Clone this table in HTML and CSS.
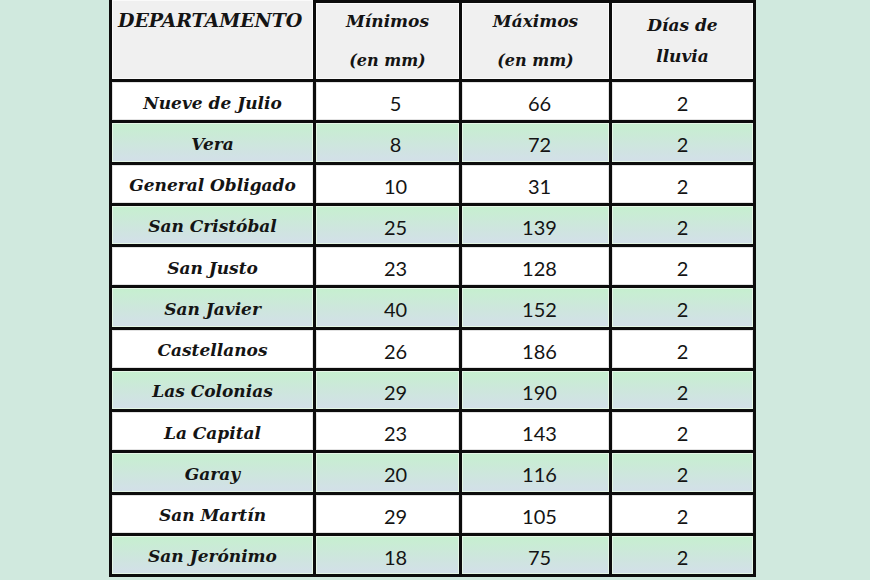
FILE: index.html
```html
<!DOCTYPE html>
<html lang="es">
<head>
<meta charset="utf-8">
<title>Lluvias por departamento</title>
<link rel="stylesheet" href="styles.css">
</head>
<body>
<div class="page">
  <div class="grid">
    <div class="cell head first"><span class="h-dep">DEPARTAMENTO</span></div>
    <div class="cell head"><span class="h-line1">Mínimos</span><span class="h-line2">(en mm)</span></div>
    <div class="cell head"><span class="h-line1">Máximos</span><span class="h-line2">(en mm)</span></div>
    <div class="cell head days"><span>Días de</span><span>lluvia</span></div>

    <div class="cell name">Nueve de Julio</div><div class="cell num c2">5</div><div class="cell num c3">66</div><div class="cell num c4">2</div>
    <div class="cell name g">Vera</div><div class="cell num c2 g">8</div><div class="cell num c3 g">72</div><div class="cell num c4 g">2</div>
    <div class="cell name">General Obligado</div><div class="cell num c2">10</div><div class="cell num c3">31</div><div class="cell num c4">2</div>
    <div class="cell name g">San Cristóbal</div><div class="cell num c2 g">25</div><div class="cell num c3 g">139</div><div class="cell num c4 g">2</div>
    <div class="cell name">San Justo</div><div class="cell num c2">23</div><div class="cell num c3">128</div><div class="cell num c4">2</div>
    <div class="cell name g">San Javier</div><div class="cell num c2 g">40</div><div class="cell num c3 g">152</div><div class="cell num c4 g">2</div>
    <div class="cell name">Castellanos</div><div class="cell num c2">26</div><div class="cell num c3">186</div><div class="cell num c4">2</div>
    <div class="cell name g">Las Colonias</div><div class="cell num c2 g">29</div><div class="cell num c3 g">190</div><div class="cell num c4 g">2</div>
    <div class="cell name">La Capital</div><div class="cell num c2">23</div><div class="cell num c3">143</div><div class="cell num c4">2</div>
    <div class="cell name g">Garay</div><div class="cell num c2 g">20</div><div class="cell num c3 g">116</div><div class="cell num c4 g">2</div>
    <div class="cell name">San Martín</div><div class="cell num c2">29</div><div class="cell num c3">105</div><div class="cell num c4">2</div>
    <div class="cell name g">San Jerónimo</div><div class="cell num c2 g">18</div><div class="cell num c3 g">75</div><div class="cell num c4 g">2</div>
  </div>
</div>
</body>
</html>
```
FILE: styles.css
```css
html, body {
  margin: 0;
  padding: 0;
  background: #d0e9de;
  height: 100%;
  overflow: hidden;
}
.page {
  padding-left: 109px;
}
.grid {
  display: grid;
  width: max-content;
  grid-template-columns: 201px 143px 147px 141px;
  grid-template-rows: 76px repeat(12, 38.25px);
  gap: 3px;
  padding: 3px;
  background: #0c0c0c;
  color: #141414;
}
.cell {
  background: #fff;
  box-shadow: inset 0 0 0 1px #e2e2e2;
  display: flex;
  align-items: center;
  justify-content: center;
}
.cell.g {
  background: linear-gradient(to bottom, #c6f0cf 0%, #cde7dc 50%, #d3dfe9 100%);
  box-shadow: inset 0 0 0 1px #e4f6e6;
}
.head {
  background: #f0f0f0;
  box-shadow: inset 0 0 0 1px #fafafa;
  flex-direction: column;
  justify-content: flex-start;
  font-family: "DejaVu Serif", serif;
  font-weight: bold;
  font-style: italic;
  font-size: 17px;
}
.head.first {
  margin-top: -3px;
  align-items: flex-start;
  padding: 9px 0 0 6px;
}
.h-dep {
  font-size: 19px;
  letter-spacing: -0.1px;
}
.h-line1 {
  margin-top: 8px;
}
.h-line2 {
  margin-top: 20px;
  font-size: 16px;
}
.days span:first-child {
  margin-top: 12px;
}
.days span:last-child {
  margin-top: 11px;
}
.name {
  font-family: "DejaVu Serif", serif;
  font-weight: bold;
  font-style: italic;
  font-size: 17px;
  padding-top: 3px;
}
.num {
  font-family: "Lato", "Open Sans", sans-serif;
  font-size: 20px;
  padding-top: 4px;
}
.c2 { padding-left: 16px; }
.c3 { padding-left: 8px; }
```
